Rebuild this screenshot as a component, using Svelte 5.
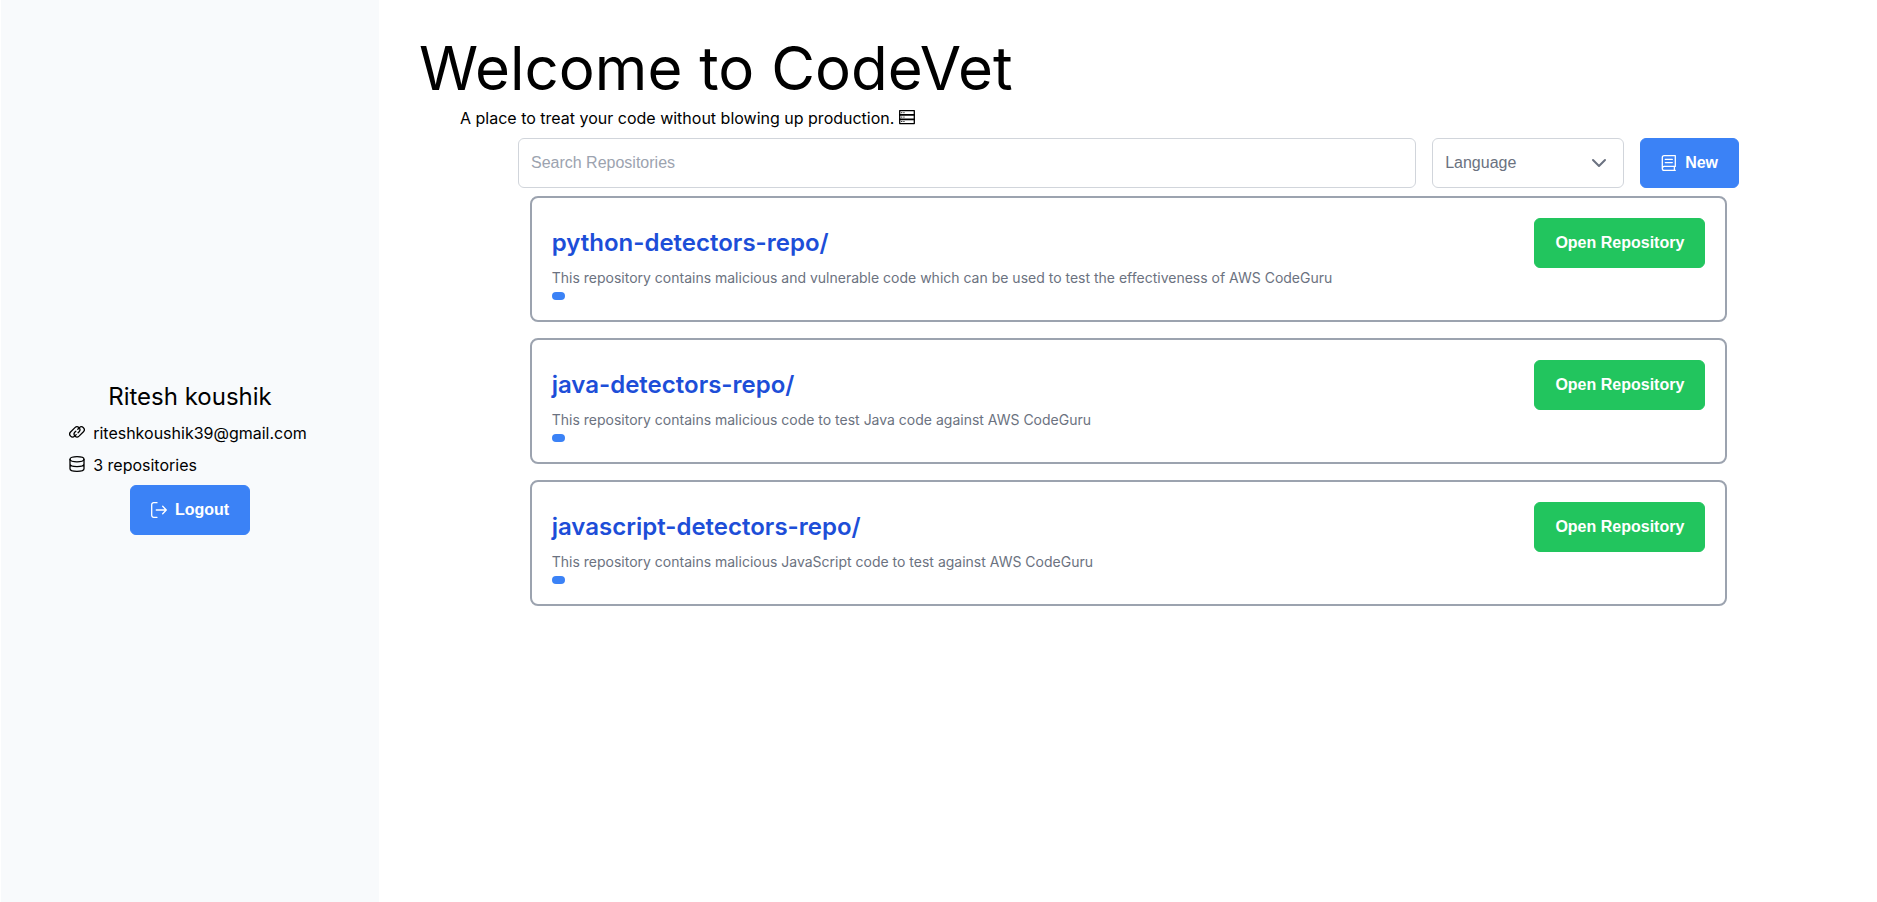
<script>
  const user = { name: 'Ritesh koushik', email: 'riteshkoushik39@gmail.com' };
  const repositories = [
    {
      name: 'python-detectors-repo/',
      description:
        'This repository contains malicious and vulnerable code which can be used to test the effectiveness of AWS CodeGuru'
    },
    {
      name: 'java-detectors-repo/',
      description: 'This repository contains malicious code to test Java code against AWS CodeGuru'
    },
    {
      name: 'javascript-detectors-repo/',
      description: 'This repository contains malicious JavaScript code to test against AWS CodeGuru'
    }
  ];
</script>

{#snippet icon(name)}
  <svg class="icon" viewBox="0 0 16 16" aria-hidden="true">
    {#if name === 'link'}
      <path d="M7.2 10.6 5.65 12.15A2.9 2.9 0 0 1 1.55 8.05L5.95 3.65A2.9 2.9 0 0 1 10.05 7.75L9.1 8.7" />
      <path d="M8.8 5.2 10.35 3.65A2.9 2.9 0 0 1 14.45 7.75L10.05 12.15A2.9 2.9 0 0 1 5.95 8.05L6.9 7.1" />
    {:else if name === 'database'}
      <ellipse cx="8" cy="3.3" rx="7" ry="2.6" />
      <path d="M1 3.3v9.4c0 1.4 3.1 2.6 7 2.6s7-1.2 7-2.6V3.3M1 8c0 1.4 3.1 2.6 7 2.6S15 9.4 15 8" />
    {:else if name === 'sign-out'}
      <path d="M6 15.3H2.7a2 2 0 0 1-2-2V2.7a2 2 0 0 1 2-2H6M5.3 8h10M11.7 4.3 15.3 8l-3.6 3.7" />
    {:else if name === 'book'}
      <path d="M14.3 11.4V.7H3.2A1.9 1.9 0 0 0 1.3 2.6v10.8a1.9 1.9 0 0 0 1.9 1.9h11.1M14.3 11.4H3.2a1.9 1.9 0 0 0-1.9 1.9M13.4 11.4v3.9M4.3 4.4h7M4.3 7.6h7" />
    {:else if name === 'server'}
      <path d="M.7 1.6h14.6v13H.7z" />
      <path d="M.7 5.9h14.6M.7 10.3h14.6" stroke-width="1.7" />
      <path d="M2.6 3.7h.3M4.8 3.7h.3M2.6 8.1h.3M4.8 8.1h.3M2.6 12.5h.3M4.8 12.5h.3" stroke-width="1" />
    {:else if name === 'chevron'}
      <path class="thick" d="M2 5 8 11l6-6" />
    {/if}
  </svg>
{/snippet}

<div class="layout">
  <aside>
    <div class="profile">
      <div class="name">{user.name}</div>
      <ul class="details">
        <li>{@render icon('link')}<span>{user.email}</span></li>
        <li>{@render icon('database')}<span>{repositories.length} repositories</span></li>
      </ul>
      <button class="button">{@render icon('sign-out')}<span>Logout</span></button>
    </div>
  </aside>

  <main>
    <h1>Welcome to CodeVet</h1>
    <p class="tagline">
      <span>A place to treat your code without blowing up production.</span>
      {@render icon('server')}
    </p>

    <div class="toolbar">
      <input type="text" placeholder="Search Repositories" aria-label="Search Repositories" />
      <div class="dropdown">
        <select aria-label="Language">
          <option>Language</option>
        </select>
        {@render icon('chevron')}
      </div>
      <button class="button">{@render icon('book')}<span>New</span></button>
    </div>

    <div class="repositories">
      {#each repositories as repo}
        <article>
          <div class="heading">
            <h2>{repo.name}</h2>
            <button class="button open">Open Repository</button>
          </div>
          <p>{repo.description}</p>
          <div class="tag"></div>
        </article>
      {/each}
    </div>
  </main>
</div>

<style>
  :global(body) {
    margin: 0;
    background: #fff;
  }

  .layout,
  .layout * {
    box-sizing: border-box;
  }

  .layout {
    display: flex;
    min-height: 100vh;
    padding-left: 1px;
    font: 16px/24px Inter, sans-serif;
    color: #000;
  }

  h1,
  h2,
  p,
  ul {
    margin: 0;
    padding: 0;
  }

  .icon {
    width: 16px;
    height: 16px;
    flex: none;
    fill: none;
    stroke: currentColor;
    stroke-width: 1.3;
    stroke-linecap: round;
    stroke-linejoin: round;
  }

  .details .icon,
  .tagline .icon {
    margin-bottom: 2px;
  }

  .thick {
    stroke-width: 2;
  }

  aside {
    flex: 0 0 378px;
    display: flex;
    align-items: center;
    justify-content: center;
    background: #f8fafc;
  }

  .profile {
    display: flex;
    flex-direction: column;
    align-items: center;
    gap: 8px;
    padding-top: 14px;
  }

  .name {
    font-size: 24px;
    line-height: 32px;
  }

  .details {
    display: flex;
    flex-direction: column;
    gap: 8px;
    padding-right: 4px;
    list-style: none;
  }

  .details li {
    display: flex;
    align-items: center;
    gap: 8px;
  }

  .button {
    display: flex;
    align-items: center;
    gap: 8px;
    height: 50px;
    padding: 12px 20px;
    border: 1px solid #3b82f6;
    border-radius: 6px;
    background: #3b82f6;
    color: #fff;
    font: bold 16px/24px "Liberation Sans", Arial, sans-serif;
    white-space: nowrap;
    cursor: pointer;
  }

  .open {
    border-color: #22c55e;
    background: #22c55e;
  }

  main {
    flex: 1;
    min-width: 0;
    display: flex;
    flex-direction: column;
    gap: 8px;
    padding: 38px 0 38px 1px;
  }

  h1 {
    padding-left: 39px;
    font-size: 60px;
    line-height: 60px;
    font-weight: 400;
  }

  .tagline {
    display: flex;
    align-items: center;
    gap: 5px;
    padding-left: 80px;
  }

  .toolbar {
    display: flex;
    justify-content: center;
    gap: 16px;
  }

  input,
  select {
    height: 50px;
    padding: 12px;
    border: 1px solid #d1d5db;
    border-radius: 6px;
    background: #fff;
    font: 16px/24px "Liberation Sans", Arial, sans-serif;
  }

  input {
    width: 60%;
  }

  input::placeholder {
    color: #9ca3af;
    opacity: 1;
  }

  .dropdown {
    position: relative;
    width: 192px;
  }

  select {
    width: 100%;
    appearance: none;
    color: #6b7280;
  }

  .dropdown .icon {
    position: absolute;
    top: 17px;
    right: 17px;
    color: #6b7280;
    pointer-events: none;
  }

  .repositories {
    display: flex;
    flex-direction: column;
    gap: 16px;
    width: 80%;
    margin: 0 auto;
  }

  article {
    padding: 20px;
    border: 2px solid #9ca3af;
    border-radius: 8px;
  }

  .heading {
    display: flex;
    align-items: center;
    justify-content: space-between;
  }

  h2 {
    color: #1d4ed8;
    font-size: 24px;
    line-height: 32px;
    font-weight: 600;
  }

  article p {
    color: #6b7280;
    font-size: 14px;
    line-height: 20px;
  }

  .tag {
    width: 13px;
    height: 8px;
    margin-top: 4px;
    border-radius: 4px;
    background: #3b82f6;
  }
</style>
